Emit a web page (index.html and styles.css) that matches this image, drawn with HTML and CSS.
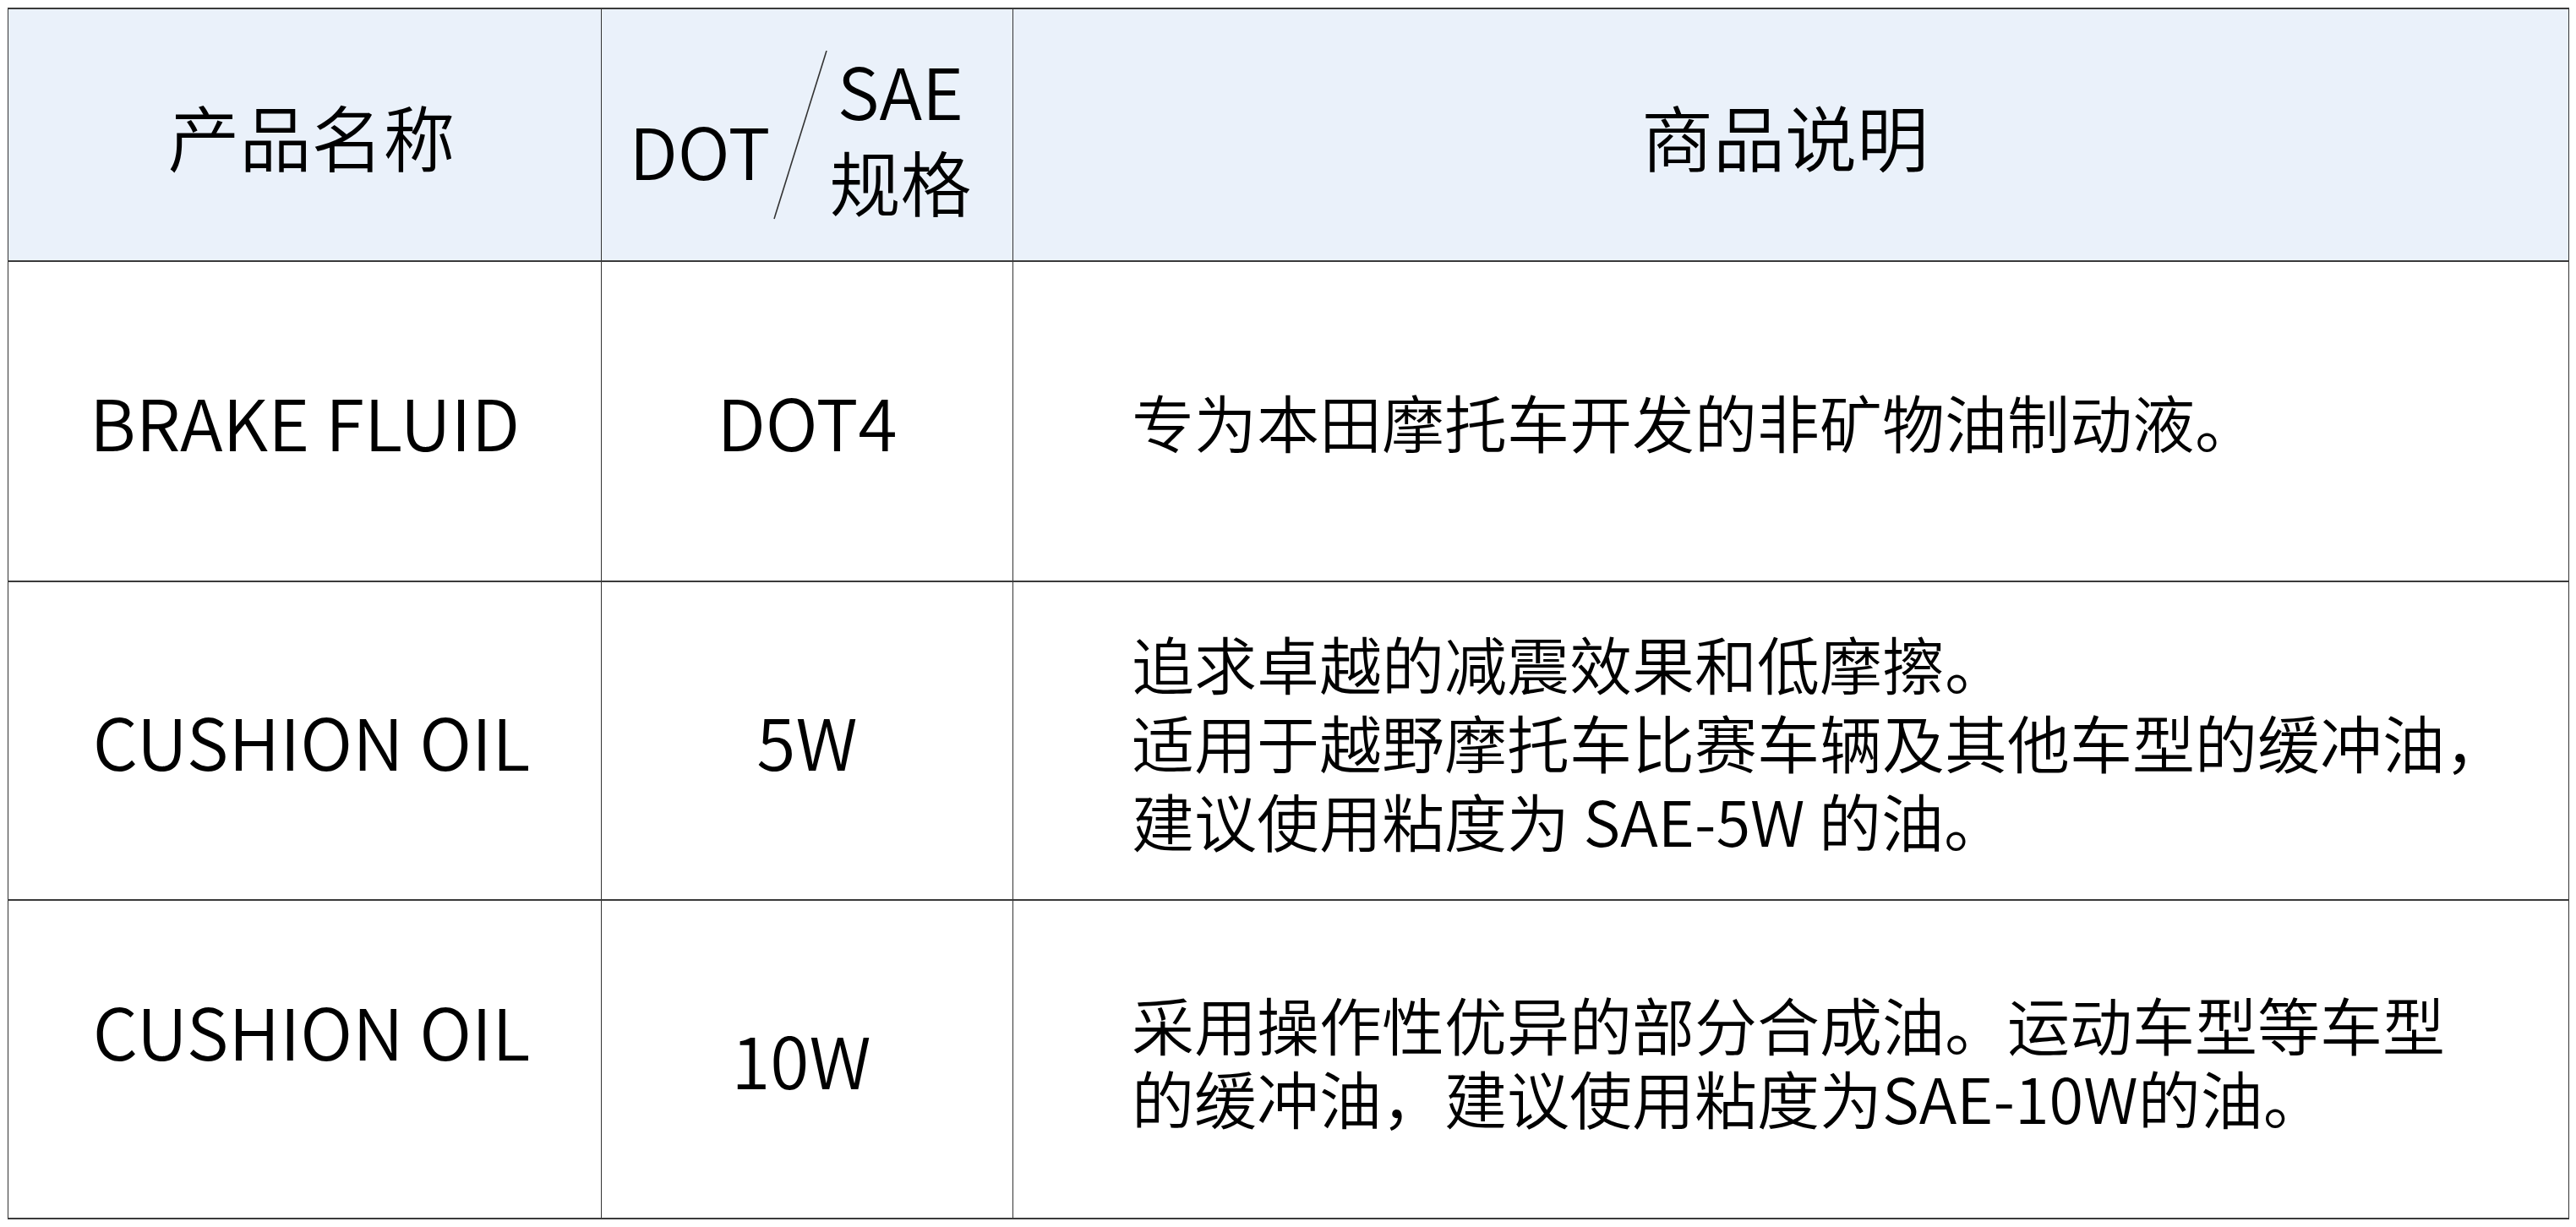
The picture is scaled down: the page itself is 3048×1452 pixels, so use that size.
FILE: index.html
```html
<!DOCTYPE html>
<html lang="zh-CN">
<head>
<meta charset="utf-8">
<title>产品规格</title>
<link rel="stylesheet" href="styles.css">
</head>
<body>
<table class="spec-table">
  <colgroup>
    <col class="col-name">
    <col class="col-spec">
    <col class="col-desc">
  </colgroup>
  <thead>
    <tr class="row-head">
      <th class="head-cell head-name">产品名称</th>
      <th class="head-cell">
        <div class="dual">
          <span class="dual-dot">DOT</span>
          <svg class="dual-slash" width="64" height="200" viewBox="0 0 64 200" aria-hidden="true">
            <line x1="63" y1="0" x2="1" y2="199" stroke="#333" stroke-width="1.6"/>
          </svg>
          <span class="dual-stack">
            <span class="dual-line">SAE</span>
            <span class="dual-line">规格</span>
          </span>
        </div>
      </th>
      <th class="head-cell head-desc">商品说明</th>
    </tr>
  </thead>
  <tbody>
    <tr class="row-body row-1">
      <td class="cell-name">BRAKE FLUID</td>
      <td class="cell-spec">DOT4</td>
      <td class="cell-desc">专为本田摩托车开发的非矿物油制动液。</td>
    </tr>
    <tr class="row-body row-2">
      <td class="cell-name name-shift">CUSHION OIL</td>
      <td class="cell-spec">5W</td>
      <td class="cell-desc desc-tall">追求卓越的减震效果和低摩擦。<br>适用于越野摩托车比赛车辆及其他车型的缓冲油，<br>建议使用粘度为 SAE-5W 的油。</td>
    </tr>
    <tr class="row-body row-3">
      <td class="cell-name name-shift name-raised">CUSHION OIL</td>
      <td class="cell-spec spec-left">10W</td>
      <td class="cell-desc desc-short">采用操作性优异的部分合成油。运动车型等车型<br>的缓冲油，建议使用粘度为SAE-10W的油。</td>
    </tr>
  </tbody>
</table>
</body>
</html>
```
FILE: styles.css
```css
html, body {
  margin: 0;
  padding: 0;
  background: #ffffff;
}

body {
  padding: 9px 0 0 9px;
  font-family: "Noto Sans CJK SC", "Noto Sans", sans-serif;
  font-weight: 350;
  color: #000;
}

.spec-table {
  border-collapse: collapse;
  table-layout: fixed;
  width: 3030px;
}

.col-name { width: 702px; }
.col-spec { width: 487px; }
.col-desc { width: 1841px; }

.spec-table th,
.spec-table td {
  border-left: 1.5px solid #333;
  border-right: 1.5px solid #333;
  border-top: 2px solid #3a3a3a;
  border-bottom: 2px solid #3a3a3a;
  padding: 0;
  vertical-align: middle;
}

.row-head { height: 299px; }
.row-1 { height: 379px; }
.row-2 { height: 377px; }
.row-3 { height: 377px; }

.spec-table .head-cell {
  background: #eaf1fa;
  font-weight: 350;
  font-size: 85px;
  line-height: 1.2;
  text-align: center;
}

.spec-table .head-name {
  padding-left: 16px;
}

.spec-table .head-desc {
  padding-right: 14px;
}

.dual {
  display: flex;
  align-items: center;
  justify-content: center;
  padding-right: 16px;
}

.dual-dot {
  font-size: 84px;
  line-height: 1.2;
  margin-top: 36px;
  margin-right: 4px;
}

.dual-slash {
  display: block;
  flex: none;
}

.dual-stack {
  display: flex;
  flex-direction: column;
  align-items: center;
  margin-left: 2px;
}

.dual-line {
  font-size: 84px;
  line-height: 108px;
}

.spec-table .cell-name,
.spec-table .cell-spec {
  font-size: 84px;
  line-height: 1.2;
  text-align: center;
}

.spec-table .name-shift {
  padding-left: 16px;
}

.spec-table .name-raised {
  padding-bottom: 68px;
}

.spec-table .spec-left {
  padding-right: 14px;
}

.spec-table .cell-desc {
  font-size: 74px;
  line-height: 1.2;
  text-align: left;
  padding-left: 140px;
}

.spec-table .desc-tall {
  line-height: 93px;
}

.spec-table .desc-short {
  line-height: 87px;
}
```
